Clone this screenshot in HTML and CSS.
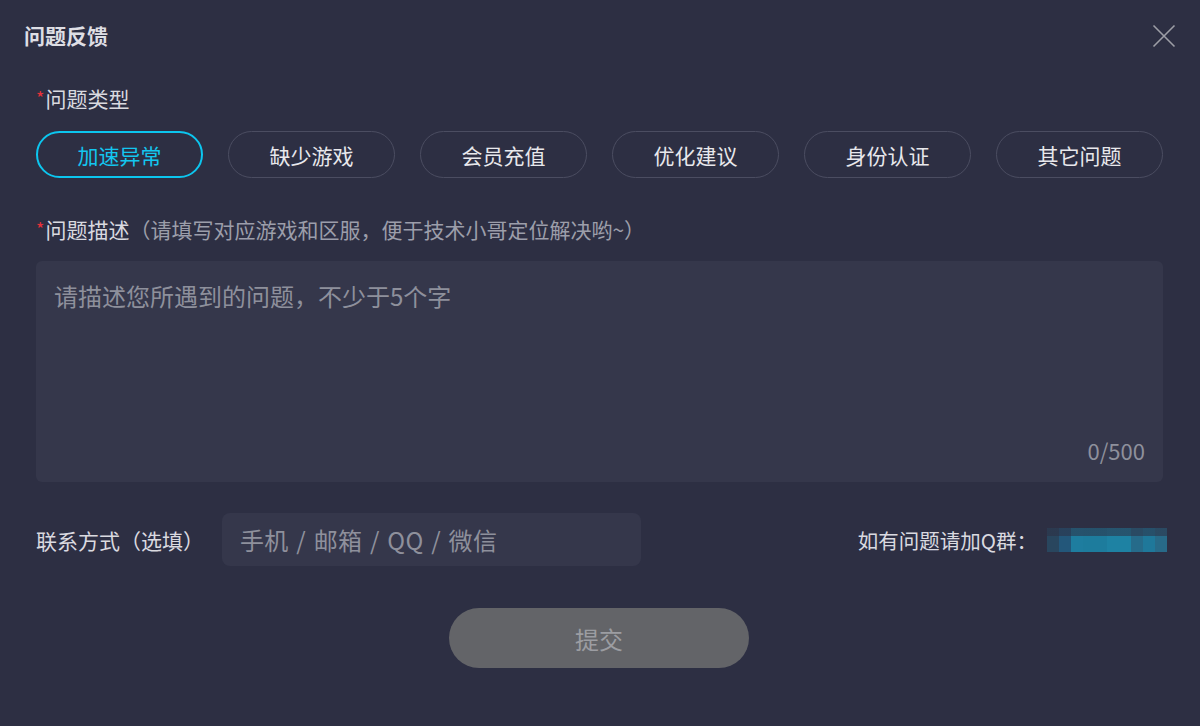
FILE: index.html
```html
<!DOCTYPE html>
<html lang="zh-CN">
<head>
<meta charset="utf-8">
<title>问题反馈</title>
<link rel="stylesheet" href="styles.css">
</head>
<body>
<div class="dialog">
  <div class="header">
    <div class="title">问题反馈</div>
    <div class="close">
      <svg width="24" height="24" viewBox="0 0 24 24"><path d="M1.5 1.5 L22.5 22.5 M22.5 1.5 L1.5 22.5" stroke="#9d9ea6" stroke-width="1.6" fill="none"/></svg>
    </div>
  </div>
  <div class="body">
    <div class="label"><span class="req">*</span>问题类型</div>
    <div class="types">
      <div class="type active">加速异常</div>
      <div class="type">缺少游戏</div>
      <div class="type">会员充值</div>
      <div class="type">优化建议</div>
      <div class="type">身份认证</div>
      <div class="type">其它问题</div>
    </div>
    <div class="label label2"><span class="req">*</span>问题描述<span class="hint">（请填写对应游戏和区服，便于技术小哥定位解决哟~）</span></div>
    <div class="textarea">
      <div class="placeholder">请描述您所遇到的问题，不少于5个字</div>
      <div class="counter">0/500</div>
    </div>
    <div class="contact">
      <div class="contact-label">联系方式（选填）</div>
      <div class="input">手机 / 邮箱 / QQ / 微信</div>
      <div class="qq">
        <span class="qq-text">如有问题请加Q群：</span>
        <span class="blur"></span>
      </div>
    </div>
    <div class="submit-row">
      <div class="submit">提交</div>
    </div>
  </div>
</div>
</body>
</html>
```
FILE: styles.css
```css
* { box-sizing: border-box; }
html, body {
  margin: 0;
  padding: 0;
  background: #2d2f43;
}
body {
  font-family: "Noto Sans CJK SC", "Noto Sans", sans-serif;
  color: #dcdce2;
}
.dialog {
  width: 1200px;
  height: 726px;
  background: #2d2f43;
  overflow: hidden;
}
.header {
  height: 70px;
  padding: 0 24px 0 24px;
  display: flex;
  align-items: center;
  justify-content: space-between;
}
.title {
  font-size: 21px;
  font-weight: bold;
  color: #dedee4;
  line-height: 28px;
  margin-top: -1px;
}
.close {
  width: 24px;
  height: 24px;
  display: flex;
  margin-top: 2px;
}
.body {
  padding: 0 37px 0 36px;
}
.label {
  margin-top: 14px;
  height: 28px;
  font-size: 21px;
  line-height: 28px;
  color: #dadae0;
  white-space: nowrap;
  display: flex;
  align-items: center;
}
.req {
  color: #e8313a;
  font-size: 18px;
  line-height: 1;
  margin-right: 1px;
  align-self: flex-start;
  margin-top: 4px;
}
.hint {
  color: #9c9eaa;
  font-size: 21px;
}
.types {
  margin-top: 19px;
  display: grid;
  grid-template-columns: repeat(6, 167px);
  column-gap: 25px;
}
.type {
  height: 47px;
  border: 1px solid #4b4d61;
  border-radius: 24px;
  display: flex;
  align-items: center;
  justify-content: center;
  font-size: 21px;
  color: #e8e8ec;
}
.type.active {
  border: 2.5px solid #0cc6ef;
  color: #13c6ef;
}
.label2 {
  margin-top: 37px;
}
.textarea {
  margin-top: 18px;
  height: 221px;
  background: #35374b;
  border-radius: 6px;
  padding: 20px 18px 17px 18px;
  display: flex;
  flex-direction: column;
  justify-content: space-between;
}
.placeholder {
  font-size: 24px;
  line-height: 30px;
  color: #8e909c;
}
.counter {
  align-self: flex-end;
  font-size: 22px;
  line-height: 30px;
  color: #8e909c;
}
.contact {
  margin-top: 31px;
  height: 53px;
  display: flex;
  align-items: center;
}
.contact-label {
  width: 186px;
  font-size: 21px;
  color: #dadae0;
  white-space: nowrap;
}
.input {
  width: 419px;
  height: 53px;
  background: #35374b;
  border-radius: 8px;
  padding-left: 18px;
  display: flex;
  align-items: center;
  font-size: 24px;
  word-spacing: 2px;
  letter-spacing: 0.3px;
  color: #8e909c;
  white-space: nowrap;
}
.qq {
  margin-left: auto;
  margin-right: -4px;
  display: flex;
  align-items: center;
}
.qq-text {
  font-size: 20.5px;
  color: #dadae0;
  white-space: nowrap;
}
.blur {
  margin-left: 10px;
  width: 120px;
  height: 24px;
  background:
    linear-gradient(to bottom, rgba(45,47,67,0.55) 0, rgba(45,47,67,0.55) 8px, transparent 8px),
    linear-gradient(to right,
      #29465e 0, #29465e 12px,
      #23577a 12px, #23577a 24px,
      #1e7d9f 24px, #1e7d9f 36px,
      #1d7c9d 36px, #1d7c9d 60px,
      #1e82a3 60px, #1e82a3 84px,
      #266b8a 84px, #266b8a 96px,
      #1f789a 96px, #1f789a 108px,
      #286a88 108px, #286a88 120px);
}
.submit-row {
  margin-top: 42px;
  display: flex;
  justify-content: center;
  padding-right: 1px;
}
.submit {
  width: 300px;
  height: 60px;
  border-radius: 30px;
  background: #636468;
  display: flex;
  align-items: center;
  justify-content: center;
  font-size: 24px;
  color: #9c9da2;
}
```
